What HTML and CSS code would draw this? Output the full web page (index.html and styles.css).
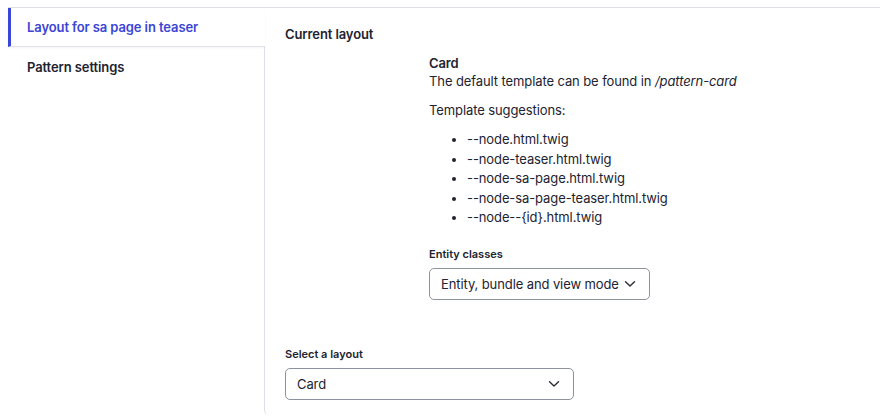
FILE: index.html
```html
<!DOCTYPE html>
<html lang="en">
<head>
<meta charset="utf-8">
<title>Layout</title>
<link rel="stylesheet" href="styles.css">
</head>
<body>
<div class="vtabs">
  <ul class="vtabs-menu">
    <li class="vtab is-active"><a href="#">Layout for sa page in teaser</a></li>
    <li class="vtab"><a href="#">Pattern settings</a></li>
  </ul>
  <div class="vtabs-pane">
    <h3 class="section-title">Current layout</h3>
    <div class="pattern">
      <div class="pattern-name">Card</div>
      <p class="pattern-desc">The default template can be found in <em>/pattern-card</em></p>
      <p class="pattern-sugg">Template suggestions:</p>
      <ul class="sugg-list">
        <li>--node.html.twig</li>
        <li>--node-teaser.html.twig</li>
        <li>--node-sa-page.html.twig</li>
        <li>--node-sa-page-teaser.html.twig</li>
        <li>--node--{id}.html.twig</li>
      </ul>
      <div class="field field-entity">
        <label class="field-label">Entity classes</label>
        <div class="select select-entity">
          <span>Entity, bundle and view mode</span>
          <svg class="chev" width="12" height="8" viewBox="0 0 12 8"><path d="M1.5 1.8 L6 6 L10.5 1.8" fill="none" stroke="#2a2c33" stroke-width="1.4" stroke-linecap="round" stroke-linejoin="round"/></svg>
        </div>
      </div>
    </div>
    <div class="field field-layout">
      <label class="field-label">Select a layout</label>
      <div class="select select-layout">
        <span>Card</span>
        <svg class="chev" width="12" height="8" viewBox="0 0 12 8"><path d="M1.5 1.8 L6 6 L10.5 1.8" fill="none" stroke="#2a2c33" stroke-width="1.4" stroke-linecap="round" stroke-linejoin="round"/></svg>
      </div>
    </div>
  </div>
</div>
</body>
</html>
```
FILE: styles.css
```css
* { box-sizing: border-box; }
html, body { margin: 0; padding: 0; background: #fff; }
body {
  font-family: Inter, "Noto Sans", "Liberation Sans", sans-serif;
  color: #222330;
  font-size: 13px;
  letter-spacing: -0.1px;
  padding: 7px 0 0 8px;
  height: 418px;
  overflow: hidden;
}
.vtabs {
  display: flex;
  border-top: 1px solid #dedfe4;
  height: 409px;
}
.vtabs-menu {
  list-style: none;
  margin: 0;
  padding: 0;
  width: 256px;
  flex: none;
}
.vtab a {
  display: block;
  text-decoration: none;
  color: #222330;
  font-weight: 600;
  font-size: 13px;
  line-height: 20px;
  padding: 9px 16px 9px 19px;
  white-space: nowrap;
}
.vtab.is-active {
  position: relative;
  z-index: 1;
  width: 257px;
  background: #fff;
  border-left: 3px solid #3b45d6;
  border-bottom: 1px solid #e2e3e8;
  box-shadow: 0 1px 2px rgba(0,0,0,0.05);
}
.vtab.is-active a {
  color: #3b45d6;
  padding: 9px 16px 9px 16px;
}
.vtab + .vtab a { padding-top: 10px; }
.vtabs-pane {
  flex: 1;
  border-left: 1px solid #dedfe4;
  border-bottom-left-radius: 5px;
  padding: 16px 20px 0 20px;
  margin-bottom: 1px;
}
.section-title {
  margin: 0;
  font-size: 13px;
  font-weight: 600;
  line-height: 20px;
}
.pattern {
  padding-left: 144px;
  margin-top: 10px;
}
.pattern-name {
  font-weight: 600;
  line-height: 18px;
}
.pattern-desc {
  margin: 0;
  line-height: 18px;
}
.pattern-sugg {
  margin: 11px 0 0;
  line-height: 18px;
}
.sugg-list {
  margin: 11px 0 0;
  padding-left: 38px;
  line-height: 19.5px;
}
.field-label {
  display: block;
  font-size: 11px;
  letter-spacing: 0;
  font-weight: 600;
  line-height: 16px;
}
.field-entity { margin-top: 18px; }
.select {
  margin-top: 6px;
  height: 32px;
  border: 1px solid #8e929c;
  border-radius: 5px;
  display: flex;
  align-items: center;
  justify-content: space-between;
  padding: 0 13px 0 11px;
  background: #fff;
  white-space: nowrap;
}
.select-entity { width: 221px; }
.select-layout { width: 289px; }
.field-layout { margin-top: 46px; }
.chev { flex: none; }
```
